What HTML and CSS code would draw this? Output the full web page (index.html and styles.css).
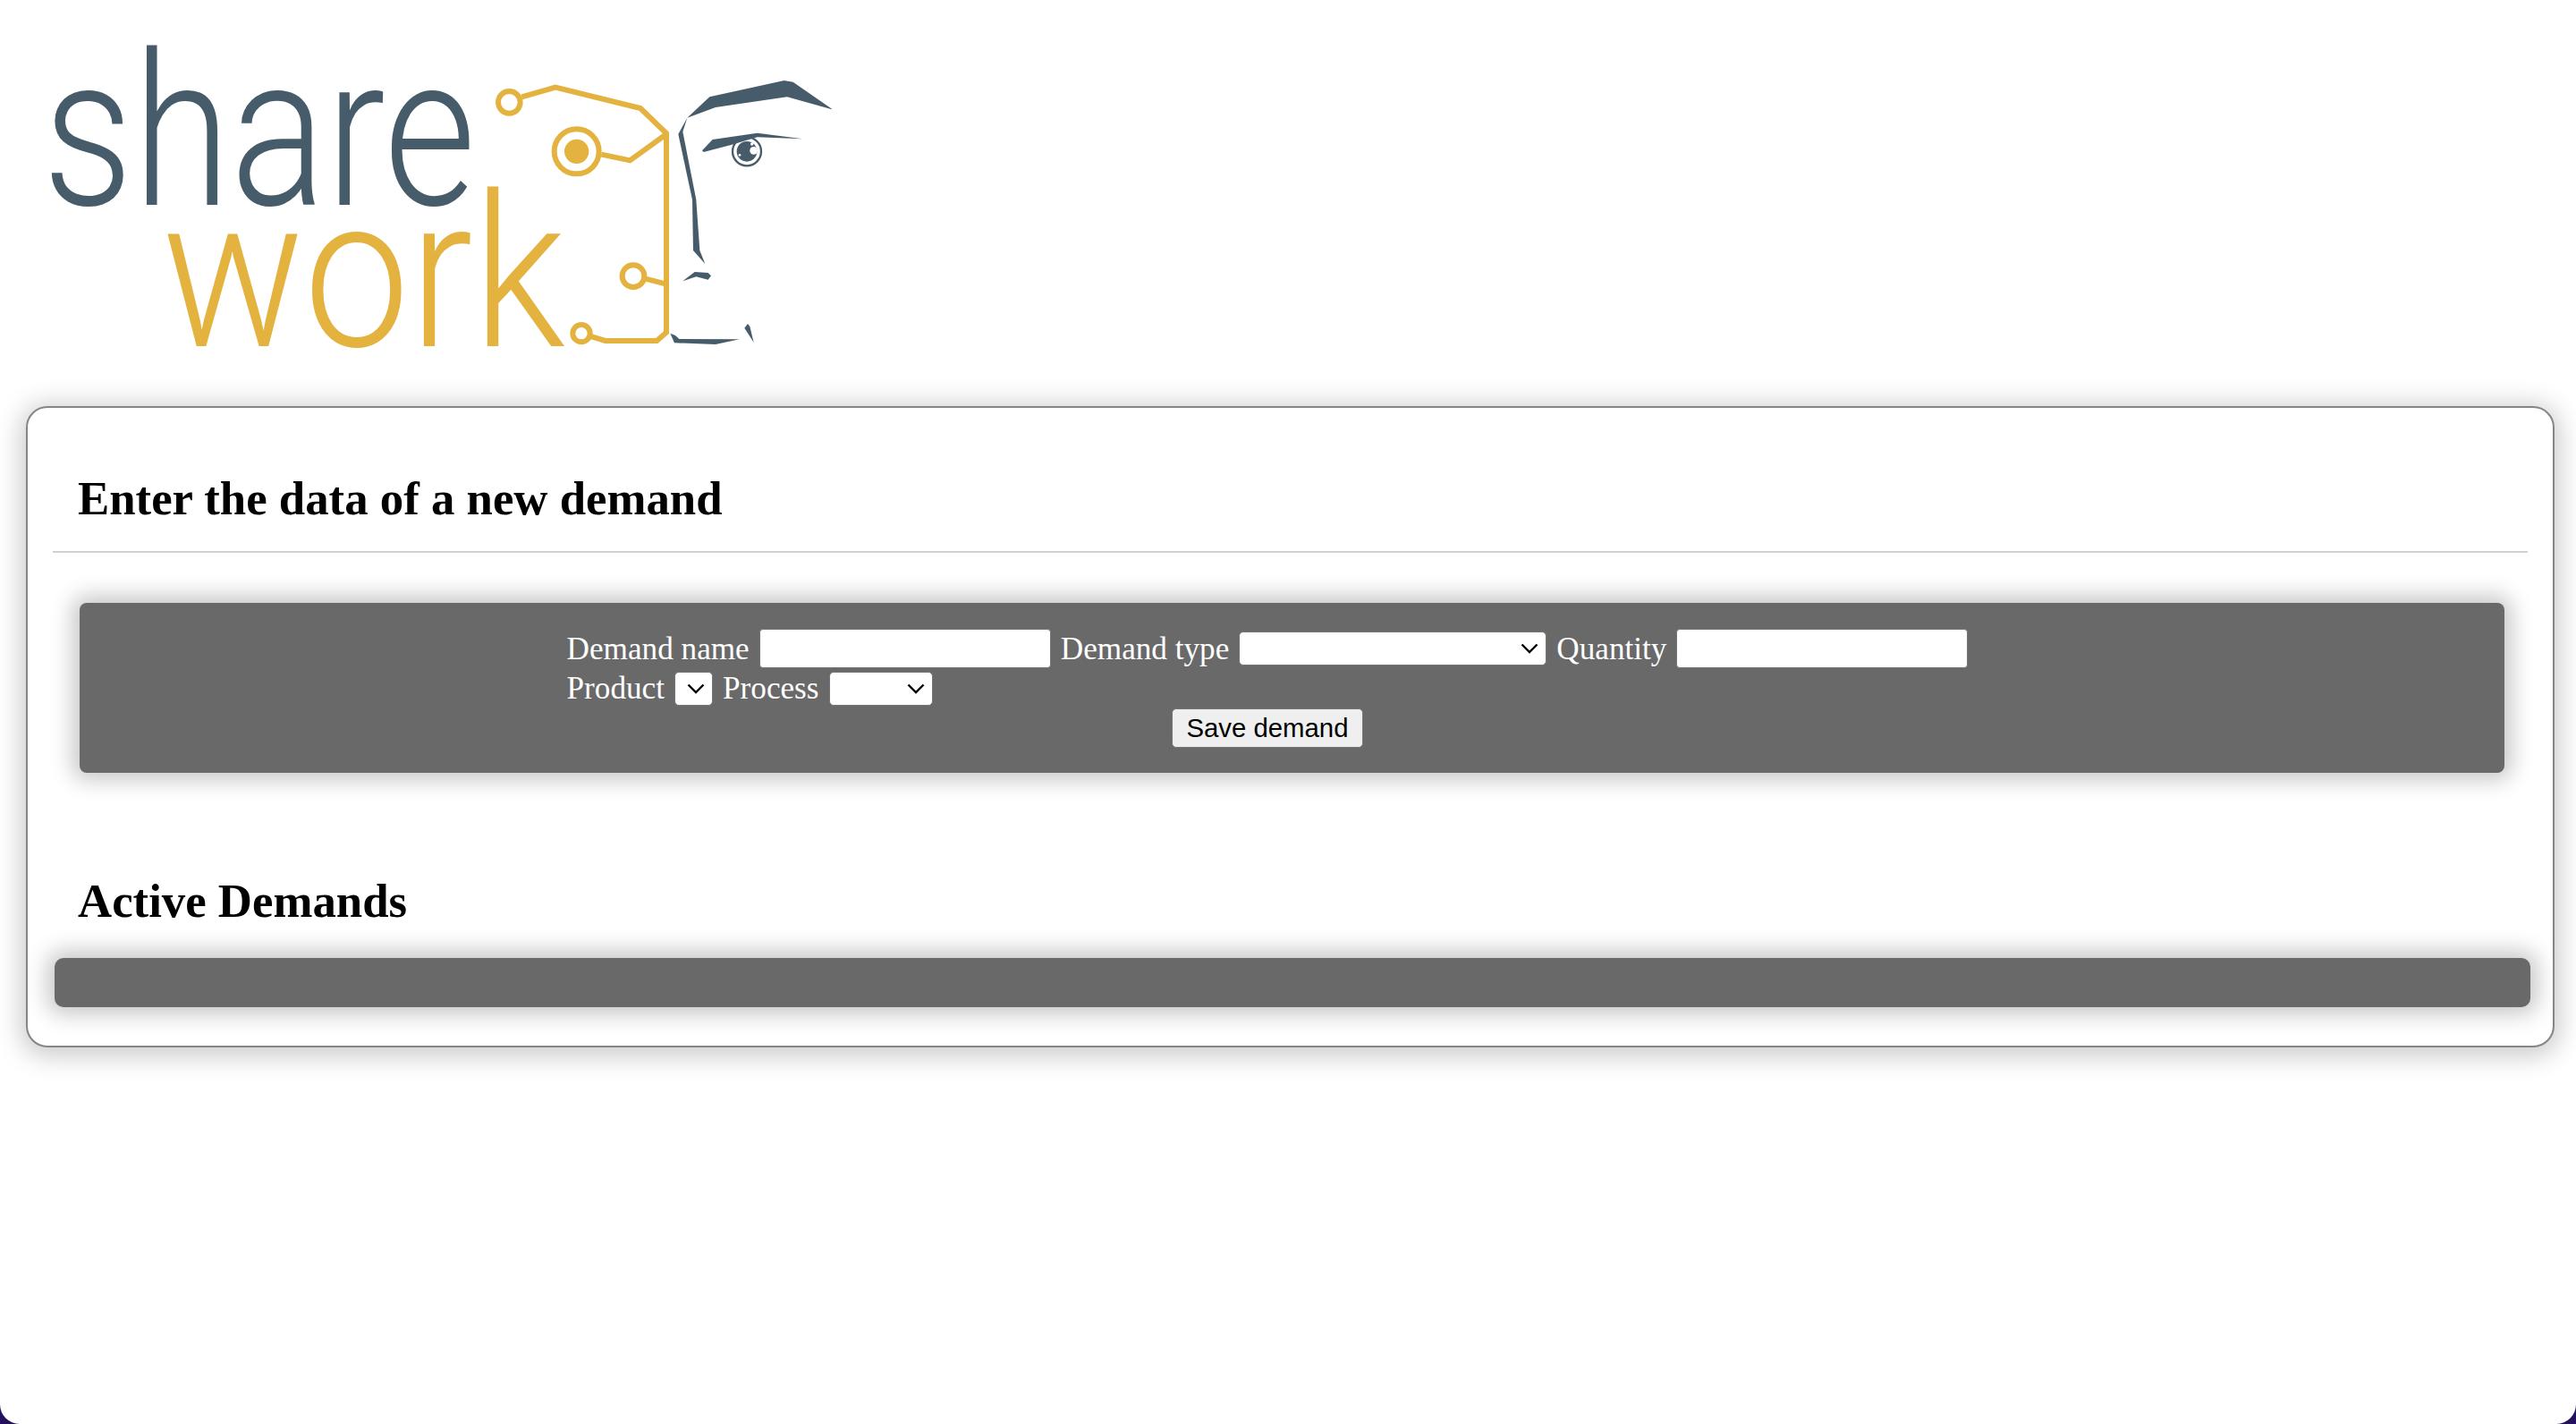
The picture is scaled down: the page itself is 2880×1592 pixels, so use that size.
FILE: index.html
```html
<!DOCTYPE html>
<html lang="en">
<head>
<meta charset="utf-8">
<title>ShareWork demands</title>
<link rel="stylesheet" href="styles.css">
</head>
<body>
<header class="brand">
  <svg class="logo" viewBox="0 0 930 450" width="930" height="450" role="img" aria-label="ShareWork logo">
    <text class="word word-share" x="48" y="229" textLength="484" lengthAdjust="spacingAndGlyphs">share</text>
    <text class="word word-work" x="181" y="387" textLength="451" lengthAdjust="spacingAndGlyphs">work</text>
    <g transform="translate(500 50) scale(.33333)">
      <g class="circuit">
        <polyline points="250,175 363,143 648,213 735,297 735,965 703,993 530,993 480,978"/>
        <polyline points="517,368 613,388 735,300"/>
        <line x1="665" y1="785" x2="735" y2="803"/>
        <circle cx="208" cy="193" r="37"/>
        <circle cx="434" cy="358" r="75"/>
        <circle cx="624" cy="776" r="37"/>
        <circle cx="450" cy="968" r="29"/>
      </g>
      <circle class="circuit-dot" cx="434" cy="358" r="41"/>
      <g class="face">
        <polygon points="805,245 880,175 1130,120 1160,125 1292,217 1140,175 900,210"/>
        <polygon points="805,245 775,300 822,520 825,690 865,735 847,690 835,520 790,292"/>
        <polygon points="855,355 890,318 1040,296 1192,316 1040,310 955,335 860,360"/>
        <polygon points="790,793 830,762 875,765 885,775 875,788 855,783 835,778"/>
        <polygon points="748,968 765,975 778,987 980,988 900,1005 762,1000"/>
        <polygon points="997,950 1008,936 1015,945 1028,998"/>
        <circle cx="1005" cy="358" r="34"/>
        <circle class="eye-ring" cx="1005" cy="358" r="48"/>
      </g>
      <circle class="eye-glint" cx="1028" cy="355" r="13"/>
      <circle class="eye-glint" cx="1022" cy="333" r="5"/>
      <circle class="eye-glint" cx="981" cy="370" r="4"/>
    </g>
  </svg>
</header>
<main class="card">
  <h2 class="title title-first">Enter the data of a new demand</h2>
  <hr class="rule">
  <section class="panel">
    <form class="demand-form">
      <div class="row">
        <label for="name">Demand name</label>
        <input class="text-field" id="name" type="text">
        <label for="type">Demand type</label>
        <select class="pick pick-type" id="type"><option></option></select>
        <label for="qty">Quantity</label>
        <input class="text-field" id="qty" type="text">
      </div>
      <div class="row">
        <label for="product">Product</label>
        <select class="pick pick-product" id="product"><option></option></select>
        <label for="process">Process</label>
        <select class="pick pick-process" id="process"><option></option></select>
      </div>
      <div class="row row-action">
        <button class="save" type="button">Save demand</button>
      </div>
    </form>
  </section>
  <h2 class="title title-second">Active Demands</h2>
  <section class="bar"></section>
</main>
</body>
</html>
```
FILE: styles.css
```css
html {
  margin: 0;
  height: 100%;
  background: #24105f;
}
body {
  margin: 0;
  height: 1592px;
  box-sizing: border-box;
  overflow: hidden;
  background: #fff;
  border-radius: 0 0 22px 22px;
  font-family: "Liberation Serif", "Times New Roman", serif;
  color: #000;
}
.brand {
  height: 454px;
}
.logo { display: block; }
.word {
  font-family: Roboto, sans-serif;
  font-weight: 300;
  font-size: 238px;
}
.word-share { fill: #475c6b; }
.word-work { fill: #e3b23f; }
.circuit {
  fill: none;
  stroke: #e3b23f;
  stroke-width: 18;
}
.circuit-dot { fill: #e3b23f; }
.face { fill: #475c6b; }
.eye-ring {
  fill: none;
  stroke: #475c6b;
  stroke-width: 7;
}
.eye-glint { fill: #fff; }
.card {
  margin: 0 24px 0 29px;
  height: 717px;
  box-sizing: border-box;
  padding: 0 28px;
  background: #fff;
  border: 2px solid #858585;
  border-radius: 24px;
  box-shadow: 0 4px 28px 6px #ccc;
}
.title {
  margin: 0;
  font-size: 52.8px;
  line-height: 55px;
  font-weight: 700;
  padding-left: 28px;
}
.title-first { padding-top: 74px; }
.rule {
  margin: 31px 0 0;
  border: 0;
  height: 2px;
  background: #d0d0d0;
}
.panel {
  margin: 56px 26px 0 30px;
  height: 190px;
  box-sizing: border-box;
  padding: 29px 55px 0 0;
  display: flex;
  justify-content: center;
  background: #696969;
  border-radius: 8px;
  box-shadow: 0 0 24px 8px #c7c7c7;
}
.demand-form {
  display: flex;
  flex-direction: column;
  gap: 3px;
  color: #fff;
  font-size: 35.2px;
  line-height: 39px;
}
.row {
  display: flex;
  align-items: center;
  gap: 11px;
}
.row-action { justify-content: center; }
.text-field {
  width: 326px;
  height: 44px;
  box-sizing: border-box;
  border: 1px solid #757575;
  border-radius: 4px;
  background: #fff;
  padding: 0;
}
.pick {
  appearance: none;
  height: 38px;
  box-sizing: border-box;
  padding: 0;
  border: 1px solid #757575;
  border-radius: 5px;
  background: #fff url("data:image/svg+xml,%3Csvg xmlns='http://www.w3.org/2000/svg' width='20' height='12'%3E%3Cpath d='M1.5 1.5 10 10 18.5 1.5' fill='none' stroke='%23000' stroke-width='2.4'/%3E%3C/svg%3E") no-repeat right 8px center;
}
.pick-type { width: 344px; }
.pick-product { width: 43px; }
.pick-process { width: 116px; }
.save {
  width: 214px;
  height: 44px;
  padding: 0;
  box-sizing: border-box;
  border: 1px solid #767676;
  border-radius: 5px;
  background: #efefef;
  color: #000;
  font-family: "Liberation Sans", Arial, sans-serif;
  font-size: 29.33px;
}
.title-second { padding-top: 116px; }
.bar {
  margin: 36px -3px 0 2px;
  height: 55px;
  background: #696969;
  border-radius: 10px;
  box-shadow: 0 0 24px 8px #c7c7c7;
}
```
